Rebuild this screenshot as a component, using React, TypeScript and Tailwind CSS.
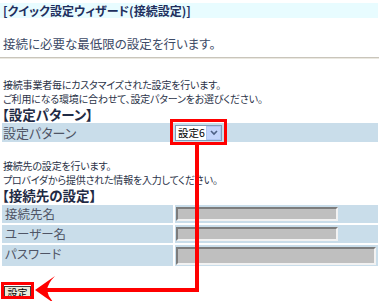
import React from 'react'

const jp = "font-['Noto_Sans_CJK_JP',sans-serif] [font-feature-settings:'palt']"

const FieldRow: React.FC<{ label: string; wide?: boolean }> = ({ label, wide }) => {
    return (
        <div className={`grid grid-cols-[171px_1fr] gap-[2px] ${wide ? 'h-[21px]' : 'h-[18px]'}`}>
            <div className="bg-[#c9ddea] pl-[3px] text-[12.5px] leading-[18px] text-[#4f5566]">{label}</div>
            <div className="bg-[#c9ddea] pt-[2px] pl-[1px]">
                <div
                    className={`bg-[#bfbfbf] border-2 border-t-[#7c7c7c] border-l-[#7c7c7c] border-b-[#f2f2f2] border-r-[#f2f2f2] ${
                        wide ? 'w-[200px] h-[18px]' : 'w-[162px] h-[14px]'
                    }`}
                />
            </div>
        </div>
    )
}

const App: React.FC = () => {
    return (
        <div className={`relative w-[380px] h-[301px] overflow-hidden bg-white ${jp}`}>
            <div className="pt-[3px] pr-[2px]">
                <div className="h-[15px] bg-[#e8fcff] pl-[3px] text-[12px] font-bold leading-[15px] text-[#1e2f5e]">
                    [クイック設定ウィザード(接続設定)]
                </div>
            </div>

            <p className="mt-[18px] pl-[3px] text-[12.5px] leading-[16px] text-[#3d4a66]">
                接続に必要な最低限の設定を行います。
            </p>
            <div className="mt-[5px] mr-[1px] h-[2px] border-t border-t-[#c9c5bb] border-b border-b-[#ebe8e0]" />

            <div className="mt-[19px] pl-[3px] text-[10px] leading-[14px] tracking-[-0.2px] text-[#2b3348]">
                <p>接続事業者毎にカスタマイズされた設定を行います。</p>
                <p>ご利用になる環境に合わせて、設定パターンをお選びください。</p>
            </div>
            <h2 className="pl-[2px] text-[13.5px] font-bold leading-[16px] text-[#1f2a44]">【設定パターン】</h2>
            <div className="mt-[1px] mx-[2px] h-[19px] flex items-center bg-[#c9ddea]">
                <div className="w-[173px] pl-[1px] text-[13px] leading-[19px] text-[#4f5566]">設定パターン</div>
                <div className="w-[47px] h-[16px] flex items-center bg-white border border-[#7f9db9]">
                    <span className="flex-1 pl-[2px] whitespace-nowrap text-[10.5px] leading-[14px] text-black">設定6</span>
                    <span className="w-[15px] h-[14px] shrink-0 flex items-center justify-center bg-[#c3d5fb] border border-[#b1c6f0]">
                        <svg width="8" height="6" viewBox="0 0 8 6">
                            <path d="M1 1 L4 4 L7 1" fill="none" stroke="#4d6185" strokeWidth="1.6" />
                        </svg>
                    </span>
                </div>
            </div>

            <div className="mt-[17px] pl-[3px] text-[10px] leading-[14px] tracking-[-0.2px] text-[#2b3348]">
                <p>接続先の設定を行います。</p>
                <p>プロバイダから提供された情報を入力してください。</p>
            </div>
            <h2 className="pl-[2px] text-[13.5px] font-bold leading-[16px] text-[#1f2a44]">【接続先の設定】</h2>
            <div className="mt-[2px] px-[2px] flex flex-col gap-[2px]">
                <FieldRow label="接続先名" />
                <FieldRow label="ユーザー名" />
                <FieldRow label="パスワード" wide />
            </div>

            <div className="mt-[20px] pl-[4px]">
                <button className="w-[27px] h-[13px] flex items-center justify-center bg-[#ece9d8] border border-[#3c3c3c] text-[10px] leading-none text-black">
                    設定
                </button>
            </div>

            {/* annotation overlay */}
            <svg className="absolute inset-0 pointer-events-none" width="380" height="301" viewBox="0 0 380 301">
                <rect x="171.5" y="120.5" width="54" height="23" fill="none" stroke="#ff0000" strokeWidth="3" />
                <rect x="195" y="145" width="4" height="147" fill="#ff0000" />
                <rect x="46" y="288" width="153" height="4" fill="#ff0000" />
                <path d="M35 290 L55 276 Q48 283 47 290 Q48 297 55 304 Z" fill="#ff0000" />
                <rect x="2.5" y="283.5" width="30" height="14" fill="none" stroke="#ff0000" strokeWidth="3" />
            </svg>
        </div>
    )
}

export default App
